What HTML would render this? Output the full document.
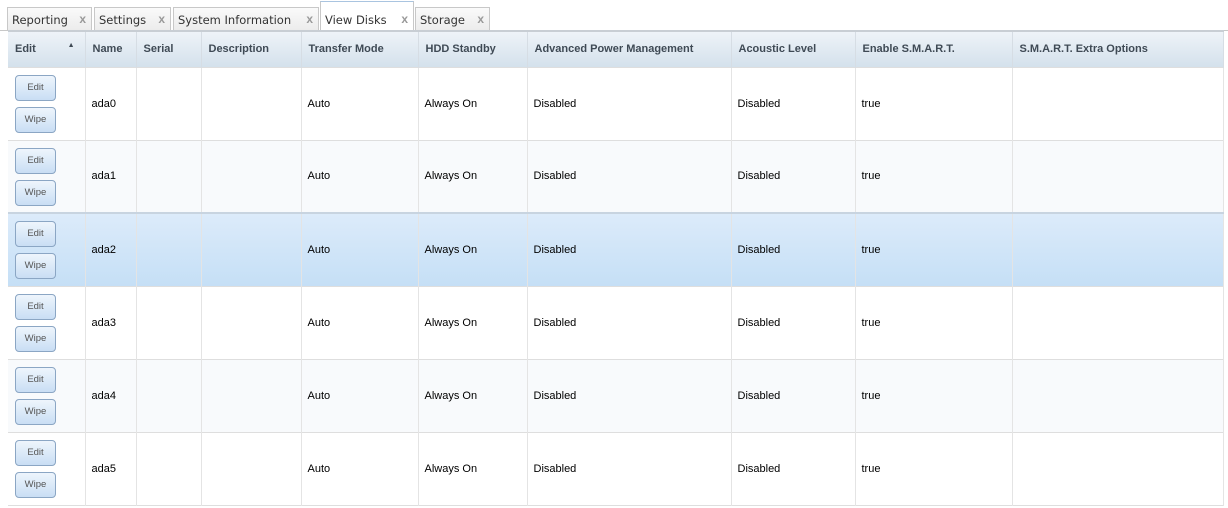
<!DOCTYPE html>
<html><head><style>
*{box-sizing:border-box;margin:0;padding:0}
body{width:1228px;height:508px;background:#fff;position:relative;overflow:hidden;font-family:"Liberation Sans",Arial,sans-serif}
.tab{position:absolute;top:7px;height:23px;border:1px solid #c8c8c8;border-bottom:none;background:linear-gradient(#fafafa,#ececec);font-family:"DejaVu Sans",sans-serif;font-size:11.5px;color:#333;padding:5px 0 0 4px}
.tab .x{position:absolute;right:5px;top:4px;font-size:12px;color:#999;font-weight:bold;font-family:"Liberation Sans",sans-serif}
.tab.act{top:1px;height:30px;background:#fff;padding-top:11px;border-top:1px solid #a9c4e0}
.tab.act .x{top:10px}
table{position:absolute;left:8px;top:30px;width:1215px;border-collapse:collapse;table-layout:fixed;font-size:11px;color:#000;border-bottom:1px solid #dedede}
th{height:36px;background:linear-gradient(#eef3f8,#d4e1ec);text-align:left;font-weight:bold;color:#3f4a55;padding-left:7px;border-right:1px solid #d6dde4;border-top:2px solid #c8ced4}
td{height:73px;padding-left:6px;border-right:1px solid #e4e4e4;border-top:1px solid #dedede}
tr.a td{background:#f8fafc}
tr.s td{background:linear-gradient(#dcebfa,#c5dff6);border-top:2px solid #c8d4e0}
.b{display:block;width:41px;height:26px;margin:6px 0 5px 1px;border:1px solid #8ba6c4;border-radius:4px;background:linear-gradient(#eef5fc,#c9def4);font-size:9.5px;color:#555;text-align:center;line-height:24px}
</style></head><body>
<div style="position:absolute;left:0;top:30px;width:1228px;border-top:1px solid #c8c8c8"></div>
<div class="tab" style="left:7px;width:85px">Reporting<span class="x">x</span></div>
<div class="tab" style="left:94px;width:77px">Settings<span class="x">x</span></div>
<div class="tab" style="left:173px;width:146px">System Information<span class="x">x</span></div>
<div class="tab act" style="left:320px;width:94px">View Disks<span class="x">x</span></div>
<div class="tab" style="left:415px;width:75px">Storage<span class="x">x</span></div>
<table>
<colgroup><col style="width:77px"><col style="width:51px"><col style="width:65px"><col style="width:100px"><col style="width:117px"><col style="width:109px"><col style="width:204px"><col style="width:124px"><col style="width:157px"><col style="width:211px"></colgroup>
<tr><th style="position:relative">Edit<span style="position:absolute;right:10px;top:10px;font-size:7px">▲</span></th><th>Name</th><th>Serial</th><th>Description</th><th>Transfer Mode</th><th>HDD Standby</th><th>Advanced Power Management</th><th>Acoustic Level</th><th>Enable S.M.A.R.T.</th><th>S.M.A.R.T. Extra Options</th></tr>
<tr><td><span class="b">Edit</span><span class="b">Wipe</span></td><td>ada0</td><td></td><td></td><td>Auto</td><td>Always On</td><td>Disabled</td><td>Disabled</td><td>true</td><td></td></tr>
<tr class="a"><td><span class="b">Edit</span><span class="b">Wipe</span></td><td>ada1</td><td></td><td></td><td>Auto</td><td>Always On</td><td>Disabled</td><td>Disabled</td><td>true</td><td></td></tr>
<tr class="s"><td><span class="b">Edit</span><span class="b">Wipe</span></td><td>ada2</td><td></td><td></td><td>Auto</td><td>Always On</td><td>Disabled</td><td>Disabled</td><td>true</td><td></td></tr>
<tr><td><span class="b">Edit</span><span class="b">Wipe</span></td><td>ada3</td><td></td><td></td><td>Auto</td><td>Always On</td><td>Disabled</td><td>Disabled</td><td>true</td><td></td></tr>
<tr class="a"><td><span class="b">Edit</span><span class="b">Wipe</span></td><td>ada4</td><td></td><td></td><td>Auto</td><td>Always On</td><td>Disabled</td><td>Disabled</td><td>true</td><td></td></tr>
<tr><td><span class="b">Edit</span><span class="b">Wipe</span></td><td>ada5</td><td></td><td></td><td>Auto</td><td>Always On</td><td>Disabled</td><td>Disabled</td><td>true</td><td></td></tr>
</table>
</body></html>
